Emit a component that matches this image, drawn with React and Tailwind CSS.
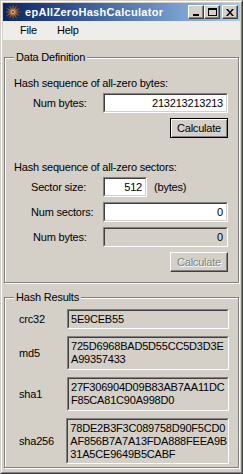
import React from 'react'

const font = "font-['Liberation_Sans',Arial,sans-serif]"

function StarIcon() {
  const pts = []
  for (let i = 0; i < 24; i++) {
    const a = (Math.PI * 2 * i) / 24 - Math.PI / 2
    const r = i % 2 === 0 ? 7.6 : 3.2
    pts.push(`${(8 + r * Math.cos(a)).toFixed(2)},${(8 + r * Math.sin(a)).toFixed(2)}`)
  }
  return (
    <svg width="16" height="16" viewBox="0 0 16 16">
      <polygon points={pts.join(' ')} fill="#c98f4e" stroke="#6e3d16" strokeWidth="0.6" />
      <circle cx="8" cy="8" r="2.6" fill="#e3b47a" stroke="#6e3d16" strokeWidth="0.6" />
      <circle cx="8" cy="8" r="1" fill="#5a2e10" />
    </svg>
  )
}

function CaptionButton({ children, className = '' }) {
  return (
    <div
      className={`w-[16px] h-[14px] bg-[#d4d0c8] border border-t-white border-l-white border-b-[#404040] border-r-[#404040] shadow-[inset_-1px_-1px_0_#808080] flex items-center justify-center ${className}`}
    >
      {children}
    </div>
  )
}

function Sunken({ children, className = '', gray = false, inner = '' }) {
  return (
    <div className={`border border-t-[#808080] border-l-[#808080] border-b-white border-r-white ${className}`}>
      <div
        className={`h-full border border-t-[#404040] border-l-[#404040] border-b-[#d4d0c8] border-r-[#d4d0c8] ${gray ? 'bg-[#d4d0c8]' : 'bg-white'} ${inner}`}
      >
        {children}
      </div>
    </div>
  )
}

function Button({ children, isDefault = false, disabled = false }) {
  if (isDefault) {
    return (
      <div className="w-[58px] h-[20px] border border-black shadow-[inset_1px_1px_0_#fff,inset_-1px_-1px_0_#808080] flex items-center justify-center text-black">
        {children}
      </div>
    )
  }
  return (
    <div
      className={`w-[58px] h-[20px] border border-t-white border-l-white border-b-[#404040] border-r-[#404040] shadow-[inset_-1px_-1px_0_#808080] flex items-center justify-center ${disabled ? 'text-[#808080] [text-shadow:1px_1px_0_#fff]' : 'text-black'}`}
    >
      {children}
    </div>
  )
}

function GroupBox({ title, className = '', children }) {
  return (
    <div
      className={`relative mx-[1px] border border-[#808080] shadow-[inset_1px_1px_0_#fff,1px_1px_0_#fff] ${className}`}
    >
      <span className="absolute -top-[7px] left-[9px] px-[2px] bg-[#d4d0c8] leading-[13px]">{title}</span>
      {children}
    </div>
  )
}

function Row({ label, labelPad, children }) {
  return (
    <div className="flex items-center h-[20px]">
      <div className={`w-[89px] ${labelPad}`}>{label}</div>
      {children}
    </div>
  )
}

const hashes = [
  { name: 'crc32', lines: ['5E9CEB55'], h: 'h-[20px]' },
  { name: 'md5', lines: ['725D6968BAD5D55CC5D3D3E', 'A99357433'], h: 'h-[34px]' },
  { name: 'sha1', lines: ['27F306904D09B83AB7AA11DC', 'F85CA81C90A998D0'], h: 'h-[34px]' },
  {
    name: 'sha256',
    lines: ['78DE2B3F3C089758D90F5CD0', 'AF856B7A7A13FDA888FEEA9B', '31A5CE9649B5CABF'],
    h: 'h-[46px]',
  },
]

export default function App() {
  return (
    <div className={`w-[243px] h-[474px] ${font} text-[11px] tracking-[-0.2px] text-black bg-[#d4d0c8] border border-t-[#d4d0c8] border-l-[#d4d0c8] border-b-[#404040] border-r-[#404040]`}>
      <div className="h-full border border-t-white border-l-white border-b-[#808080] border-r-[#808080] p-[1px] flex flex-col">
        {/* タイトルバー */}
        <div className="h-[18px] flex items-center bg-gradient-to-r from-[#0a246a] to-[#a6caf0] pl-[2px] pr-[2px]">
          <StarIcon />
          <span className="ml-[4px] text-white font-bold text-[11px] tracking-[0.3px]">epAllZeroHashCalculator</span>
          <div className="ml-auto flex items-center">
            <CaptionButton>
              <div className="w-[6px] h-[2px] bg-black mt-[6px] -ml-[1px]" />
            </CaptionButton>
            <CaptionButton>
              <div className="w-[9px] h-[8px] border border-black border-t-2 -mt-[1px]" />
            </CaptionButton>
            <CaptionButton className="ml-[2px]">
              <svg width="8" height="7" viewBox="0 0 8 7">
                <path d="M0 0h2l2 2.5L6 0h2L5 3.5 8 7H6L4 4.5 2 7H0l3-3.5z" fill="#000" />
              </svg>
            </CaptionButton>
          </div>
        </div>

        {/* メニュー */}
        <div className="h-[19px] flex items-center bg-[#eeede9] gap-[20px] pl-[17px]">
          <span>File</span>
          <span>Help</span>
        </div>

        {/* Data Definition */}
        <GroupBox title="Data Definition" className="mt-[17px] h-[226px]">
          <div className="pt-[19px] pl-[9px] pr-[10px] flex flex-col">
            <div className="leading-[13px]">Hash sequence of all-zero bytes:</div>
            <div className="mt-[3px]">
              <Row label="Num bytes:" labelPad="pl-[19px]">
                <Sunken className="flex-1 h-[20px]" inner="flex items-center justify-end pr-[3px]">
                  213213213213
                </Sunken>
              </Row>
            </div>
            <div className="mt-[5px] flex justify-end">
              <Button isDefault>Calculate</Button>
            </div>

            <div className="mt-[23px] leading-[13px]">Hash sequence of all-zero sectors:</div>
            <div className="mt-[3px] flex flex-col gap-[5px]">
              <Row label="Sector size:" labelPad="pl-[17px]">
                <Sunken className="w-[44px] h-[20px]" inner="flex items-center justify-end pr-[3px]">
                  512
                </Sunken>
                <span className="ml-[7px]">(bytes)</span>
              </Row>
              <Row label="Num sectors:" labelPad="pl-[17px]">
                <Sunken className="flex-1 h-[20px]" inner="flex items-center justify-end pr-[3px]">
                  0
                </Sunken>
              </Row>
              <Row label="Num bytes:" labelPad="pl-[19px]">
                <Sunken gray className="flex-1 h-[20px]" inner="flex items-center justify-end pr-[3px]">
                  0
                </Sunken>
              </Row>
              <div className="flex justify-end">
                <Button disabled>Calculate</Button>
              </div>
            </div>
          </div>
        </GroupBox>

        {/* Hash Results */}
        <GroupBox title="Hash Results" className="mt-[14px] h-[171px]">
          <div className="pt-[11px] pl-[14px] pr-[9px] flex flex-col gap-[7px]">
            {hashes.map((h) => (
              <div key={h.name} className="flex items-center">
                <div className="w-[48px]">{h.name}</div>
                <Sunken gray className={`flex-1 ${h.h}`} inner="flex flex-col justify-center pl-[2px] leading-[13px]">
                  {h.lines.map((l) => (
                    <div key={l}>{l}</div>
                  ))}
                </Sunken>
              </div>
            ))}
          </div>
        </GroupBox>
      </div>
    </div>
  )
}
